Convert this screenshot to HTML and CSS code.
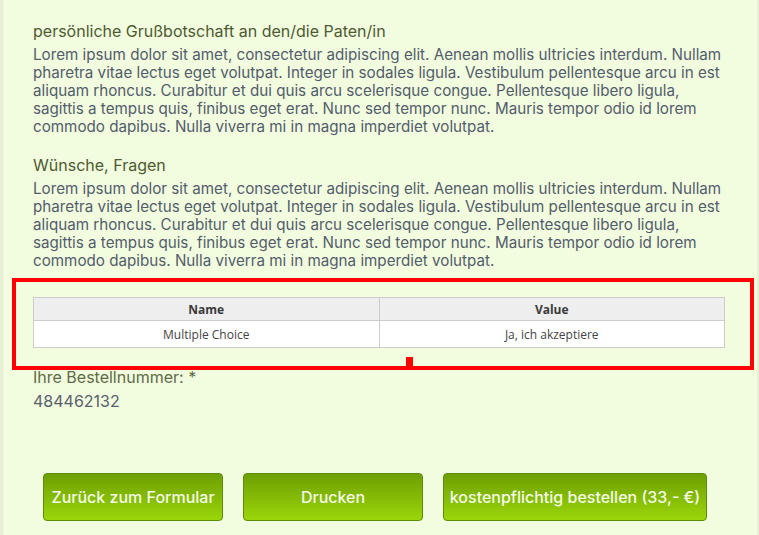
FILE: index.html
```html
<!DOCTYPE html>
<html lang="de">
<head>
<meta charset="utf-8">
<title>Bestellung</title>
<link rel="stylesheet" href="styles.css">
</head>
<body>
<div class="frame">
  <section class="field">
    <h2 class="label">persönliche Grußbotschaft an den/die Paten/in</h2>
    <p class="text">Lorem ipsum dolor sit amet, consectetur adipiscing elit. Aenean mollis ultricies interdum. Nullam pharetra vitae lectus eget volutpat. Integer in sodales ligula. Vestibulum pellentesque arcu in est aliquam rhoncus. Curabitur et dui quis arcu scelerisque congue. Pellentesque libero ligula, sagittis a tempus quis, finibus eget erat. Nunc sed tempor nunc. Mauris tempor odio id lorem commodo dapibus. Nulla viverra mi in magna imperdiet volutpat.</p>
  </section>
  <section class="field">
    <h2 class="label">Wünsche, Fragen</h2>
    <p class="text">Lorem ipsum dolor sit amet, consectetur adipiscing elit. Aenean mollis ultricies interdum. Nullam pharetra vitae lectus eget volutpat. Integer in sodales ligula. Vestibulum pellentesque arcu in est aliquam rhoncus. Curabitur et dui quis arcu scelerisque congue. Pellentesque libero ligula, sagittis a tempus quis, finibus eget erat. Nunc sed tempor nunc. Mauris tempor odio id lorem commodo dapibus. Nulla viverra mi in magna imperdiet volutpat.</p>
  </section>
  <div class="highlight">
    <table class="grid">
      <thead>
        <tr><th>Name</th><th>Value</th></tr>
      </thead>
      <tbody>
        <tr><td>Multiple Choice</td><td>Ja, ich akzeptiere</td></tr>
      </tbody>
    </table>
    <span class="notch"></span>
  </div>
  <section class="order">
    <div class="order-label">Ihre Bestellnummer: *</div>
    <div class="order-number">484462132</div>
  </section>
  <div class="actions">
    <button class="btn btn-back">Zurück zum Formular</button>
    <button class="btn btn-print">Drucken</button>
    <button class="btn btn-order">kostenpflichtig bestellen (33,- €)</button>
  </div>
</div>
</body>
</html>
```

FILE: styles.css
```css
html {
  background: #e8f0d6;
}
body {
  margin: 0;
  height: 535px;
  overflow: hidden;
}
.frame {
  box-sizing: border-box;
  width: 755px;
  height: 535px;
  margin-left: 2px;
  border-left: 1px solid #e3ecce;
  background: #f2fcdf;
  padding-top: 21px;
}
.field {
  padding-left: 30px;
  padding-right: 30px;
  margin-bottom: 19px;
}
.label {
  margin: 0 0 5px 0;
  font-family: "Inter", "Liberation Sans", sans-serif;
  font-weight: 400;
  font-size: 16px;
  line-height: 20px;
  color: #4e5a31;
}
.text {
  margin: 0;
  font-family: "Inter", "Liberation Sans", sans-serif;
  font-size: 15.2px;
  line-height: 18px;
  color: #535c6c;
}
.highlight {
  position: relative;
  box-sizing: border-box;
  width: 742px;
  margin: -11px 0 0 9px;
  border: 4px solid #ff0000;
  padding: 15px 25px 18px 17px;
}
.notch {
  position: absolute;
  left: 390px;
  bottom: 0;
  width: 7px;
  height: 9px;
  background: #ff0000;
}
.grid {
  width: 692px;
  border-collapse: collapse;
  table-layout: fixed;
  font-family: "Open Sans", "Liberation Sans", sans-serif;
  font-size: 12px;
  color: #444;
}
.grid th {
  height: 22px;
  padding: 0;
  background: #eeeeee;
  border: 1px solid #cccccc;
  font-weight: 700;
  color: #3a3a3a;
  text-align: center;
}
.grid td {
  height: 26px;
  padding: 0;
  background: #ffffff;
  border: 1px solid #cccccc;
  text-align: center;
}
.order {
  padding-left: 30px;
}
.order-label {
  font-family: "Inter", "Liberation Sans", sans-serif;
  font-size: 16px;
  line-height: 20px;
  color: #5f6b47;
  margin-top: -3px;
}
.order-number {
  font-family: "Inter", "Liberation Sans", sans-serif;
  font-size: 16px;
  line-height: 20px;
  color: #58606d;
  margin-top: 4px;
}
.actions {
  display: flex;
  gap: 20px;
  padding-left: 40px;
  margin-top: 62px;
}
.btn {
  box-sizing: border-box;
  height: 48px;
  border: 1px solid #5d8c06;
  border-radius: 4px;
  background: linear-gradient(to bottom, #6e9f02 0%, #84ba05 50%, #9ad70c 100%);
  color: #f4fbe6;
  font-family: "Inter", "Liberation Sans", sans-serif;
  font-weight: 500;
  font-size: 16px;
  padding: 0;
  cursor: pointer;
}
.btn-back { width: 180px; }
.btn-print { width: 180px; }
.btn-order { width: 264px; }
```
